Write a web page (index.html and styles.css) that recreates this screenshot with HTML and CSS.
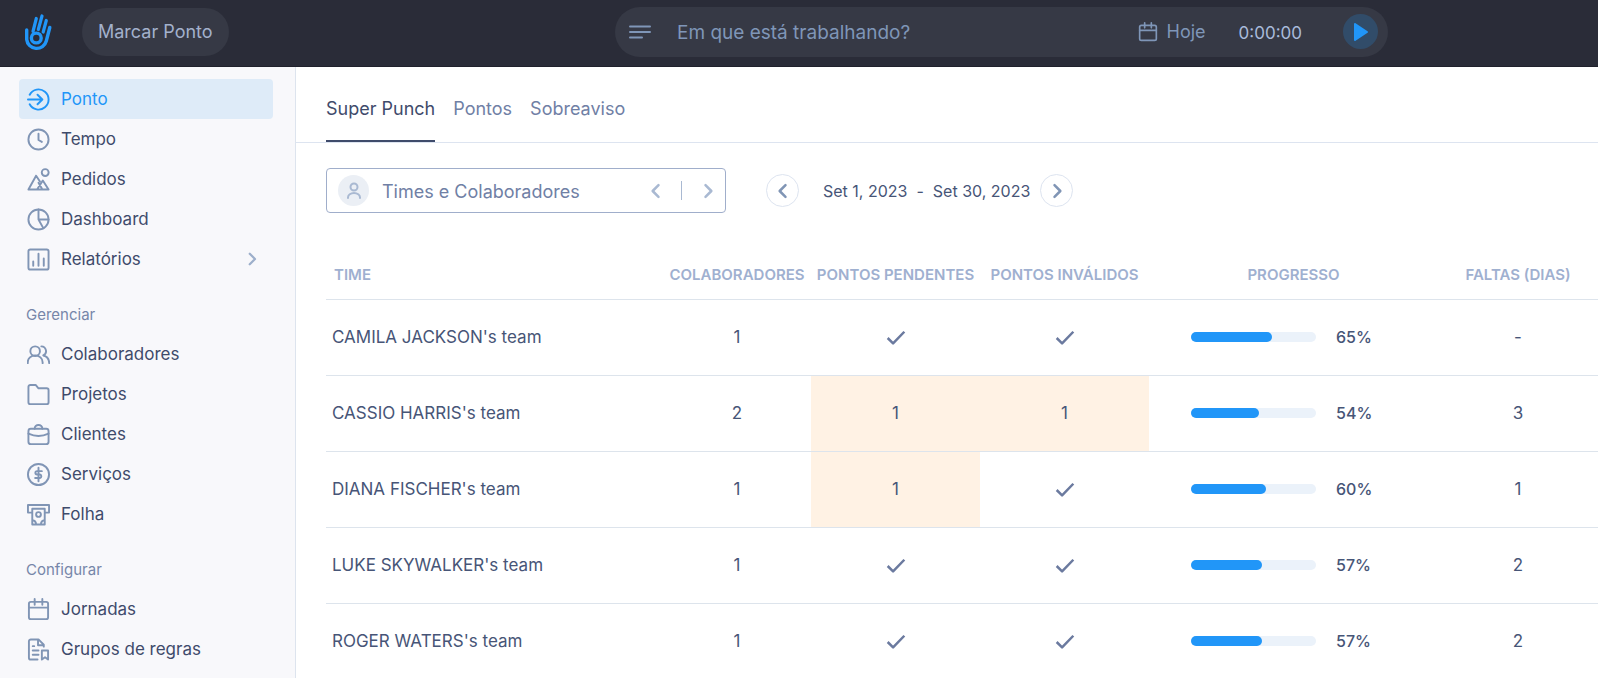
FILE: index.html
```html
<!DOCTYPE html>
<html lang="pt-BR">
<head>
    <meta charset="UTF-8">
    <meta name="viewport" content="width=device-width, initial-scale=1.0">
    <title>Super Punch</title>
    <link rel="stylesheet" href="styles.css">
</head>
<body>
    <svg class="sprite" aria-hidden="true">
        <symbol id="left" viewBox="0 0 24 24"><path d="M15 5l-7 7 7 7"/></symbol>
        <symbol id="right" viewBox="0 0 24 24"><path d="M9 5l7 7-7 7"/></symbol>
        <symbol id="check" viewBox="0 0 24 24"><path d="M2 12l6.500 6.500L22 4.500"/></symbol>
        <symbol id="calendar" viewBox="0 0 24 24"><rect x="2" y="4" width="20" height="18" rx="2"/><path d="M2 10h20M8 1v6M16 1v6"/></symbol>
    </svg>

    <header class="topbar">
        <a class="logo" href="#home" aria-label="Início">
            <svg viewBox="0 0 28 38">
                <path d="M2.700 17v9.500a10 10 0 0 0 19.600 1.500L25.800 14.500" stroke-width="3.400"/>
                <path d="M9 18.500L12.300 5.500M14.300 16.500L18 3M19.200 19L22.300 7.500" stroke-width="3.200"/>
                <circle cx="12.300" cy="25" r="4.900" stroke-width="3.400"/>
            </svg>
        </a>
        <button class="punch-btn" type="button">Marcar Ponto</button>
        <form class="tracker">
            <svg class="lines" viewBox="0 0 22 14"><path d="M1 1.500h20M1 7h20M1 12.500h12"/></svg>
            <input class="tracker-input" type="text" aria-label="Tarefa" placeholder="Em que está trabalhando?">
            <button class="today" type="button"><svg class="icon-small"><use href="#calendar"/></svg>Hoje</button>
            <span class="timer">0:00:00</span>
            <button class="play" type="button" aria-label="Iniciar">
                <svg viewBox="0 0 14 18"><path d="M1 1v16l12-8z"/></svg>
            </button>
        </form>
    </header>

    <div class="layout">
        <nav class="sidebar">
            <a class="nav-item active" href="#ponto">
                <svg class="icon" viewBox="0 0 24 24"><path d="M2.800 7a10.500 10.500 0 1 1 0 10M1 12h14.500M11 7l5 5-5 5"/></svg>Ponto
            </a>
            <a class="nav-item" href="#tempo">
                <svg class="icon" viewBox="0 0 24 24"><circle cx="12" cy="12" r="10.500"/><path d="M12 6v6.500l3.500 2"/></svg>Tempo
            </a>
            <a class="nav-item" href="#pedidos">
                <svg class="icon" viewBox="0 0 24 24"><circle cx="19" cy="4.800" r="3.600"/><path d="M13.500 14L9.500 8 1.500 22.500h21L16.500 13l-6 9.500M12 15.500l3.500 6"/></svg>Pedidos
            </a>
            <a class="nav-item" href="#dashboard">
                <svg class="icon" viewBox="0 0 24 24"><circle cx="12" cy="12" r="10.500"/><path d="M12 1.500V12h10.500M12 12l5 9"/></svg>Dashboard
            </a>
            <a class="nav-item" href="#relatorios">
                <svg class="icon" viewBox="0 0 24 24"><rect x="1.500" y="1.500" width="21" height="21" rx="2"/><path d="M6.500 14v4.500M12 6v12.500M17.500 11v7.500"/></svg>Relatórios
                <svg class="expand"><use href="#right"/></svg>
            </a>

            <h2 class="nav-title">Gerenciar</h2>
            <a class="nav-item" href="#colaboradores">
                <svg class="icon" viewBox="0 0 24 24"><circle cx="8.500" cy="8.500" r="5"/><path d="M.800 21v-1a7.700 7 0 0 1 15.500 0v1M15 3.500a5 5 0 0 1 2 9.500c3.500.800 6 3.500 6.200 8"/></svg>Colaboradores
            </a>
            <a class="nav-item" href="#projetos">
                <svg class="icon" viewBox="0 0 24 24"><path d="M3.500 2h5.500l3 3.500h8.500a2 2 0 0 1 2 2v12.500a2 2 0 0 1-2 2h-17a2 2 0 0 1-2-2V4a2 2 0 0 1 2-2z"/></svg>Projetos
            </a>
            <a class="nav-item" href="#clientes">
                <svg class="icon" viewBox="0 0 24 24"><rect x="1.500" y="6" width="21" height="16" rx="2.500"/><path d="M8 6a3.500 3.500 0 0 1 8 0M1.500 11q10.500 5 21 0"/></svg>Clientes
            </a>
            <a class="nav-item" href="#servicos">
                <svg class="icon" viewBox="0 0 24 24"><circle cx="12" cy="12" r="11"/><path d="M12 5v14M15.500 8.500h-5a1.700 1.700 0 0 0 0 3.500h3a1.900 1.900 0 0 1 0 3.700H8.500"/></svg>Serviços
            </a>
            <a class="nav-item" href="#folha">
                <svg class="icon" viewBox="0 0 24 24"><path d="M5 10H1V2h22v8h-4M5.500 6h13v16.500h-13zM5.500 18a4.500 4.500 0 0 1 4 4.500M18.500 18a4.500 4.500 0 0 0-4 4.500"/><circle cx="12" cy="12" r="2.500"/></svg>Folha
            </a>

            <h2 class="nav-title">Configurar</h2>
            <a class="nav-item" href="#jornadas">
                <svg class="icon"><use href="#calendar"/></svg>Jornadas
            </a>
            <a class="nav-item" href="#regras">
                <svg class="icon" viewBox="0 0 24 24"><path d="M11 22.500H4a2 2 0 0 1-2-2v-17a2 2 0 0 1 2-2h8l5.500 5.500v2M11.500 1.500V7.500h6M6 8.500h1.500M6 13h6M6 17.500h6M15.500 22.500V13h6.500v9.500l-3.200-2.500z"/></svg>Grupos de regras
            </a>
        </nav>

        <main class="main">
            <nav class="tabs">
                <a class="tab selected" href="#super-punch">Super Punch</a>
                <a class="tab" href="#pontos">Pontos</a>
                <a class="tab" href="#sobreaviso">Sobreaviso</a>
            </nav>

            <div class="filters">
                <div class="team-picker">
                    <span class="avatar"><svg viewBox="0 0 16 18"><circle cx="8" cy="5" r="3.500"/><path d="M2 16v-.500a6 4.500 0 0 1 12 0v.500"/></svg></span>
                    <button class="team-name" type="button">Times e Colaboradores</button>
                    <button class="step" type="button" aria-label="Time anterior"><svg><use href="#left"/></svg></button>
                    <span class="divider"></span>
                    <button class="step" type="button" aria-label="Próximo time"><svg><use href="#right"/></svg></button>
                </div>
                <div class="period">
                    <button class="round" type="button" aria-label="Período anterior"><svg><use href="#left"/></svg></button>
                    <span class="dates"><span>Set 1, 2023</span><span>-</span><span>Set 30, 2023</span></span>
                    <button class="round" type="button" aria-label="Próximo período"><svg><use href="#right"/></svg></button>
                </div>
            </div>

            <table class="teams">
                <thead>
                    <tr>
                        <th class="col-team">Time</th>
                        <th class="col-members">Colaboradores</th>
                        <th class="col-punch">Pontos pendentes</th>
                        <th class="col-punch">Pontos inválidos</th>
                        <th class="col-progress">Progresso</th>
                        <th class="col-absence">Faltas (dias)</th>
                    </tr>
                </thead>
                <tbody>
                    <tr>
                        <td>CAMILA JACKSON's team</td>
                        <td>1</td>
                        <td><svg class="check"><use href="#check"/></svg></td>
                        <td><svg class="check"><use href="#check"/></svg></td>
                        <td><div class="progress"><div class="bar"><div class="fill" style="width: 65%"></div></div>65%</div></td>
                        <td>-</td>
                    </tr>
                    <tr>
                        <td>CASSIO HARRIS's team</td>
                        <td>2</td>
                        <td class="warn">1</td>
                        <td class="warn">1</td>
                        <td><div class="progress"><div class="bar"><div class="fill" style="width: 54%"></div></div>54%</div></td>
                        <td>3</td>
                    </tr>
                    <tr>
                        <td>DIANA FISCHER's team</td>
                        <td>1</td>
                        <td class="warn">1</td>
                        <td><svg class="check"><use href="#check"/></svg></td>
                        <td><div class="progress"><div class="bar"><div class="fill" style="width: 60%"></div></div>60%</div></td>
                        <td>1</td>
                    </tr>
                    <tr>
                        <td>LUKE SKYWALKER's team</td>
                        <td>1</td>
                        <td><svg class="check"><use href="#check"/></svg></td>
                        <td><svg class="check"><use href="#check"/></svg></td>
                        <td><div class="progress"><div class="bar"><div class="fill" style="width: 57%"></div></div>57%</div></td>
                        <td>2</td>
                    </tr>
                    <tr>
                        <td>ROGER WATERS's team</td>
                        <td>1</td>
                        <td><svg class="check"><use href="#check"/></svg></td>
                        <td><svg class="check"><use href="#check"/></svg></td>
                        <td><div class="progress"><div class="bar"><div class="fill" style="width: 57%"></div></div>57%</div></td>
                        <td>2</td>
                    </tr>
                </tbody>
            </table>
        </main>
    </div>
</body>
</html>
```
FILE: styles.css
```css
* {
    margin: 0;
    padding: 0;
    box-sizing: border-box;
}

body {
    display: flex;
    flex-direction: column;
    height: 100vh;
    overflow: hidden;
    font-family: Inter, "Liberation Sans", sans-serif;
    font-size: 17px;
    color: #475577;
    background-color: #fff;
}

a {
    color: inherit;
    text-decoration: none;
}

button,
input {
    font: inherit;
    color: inherit;
    background: none;
    border: none;
}

svg {
    fill: none;
    stroke: currentColor;
    stroke-width: 2;
    stroke-linecap: round;
    stroke-linejoin: round;
    flex-shrink: 0;
}

.sprite {
    display: none;
}

/* Top bar */
.topbar {
    display: flex;
    align-items: center;
    flex-shrink: 0;
    height: 67px;
    padding: 0 210px 3px 24px;
    background-color: #2a2c38;
    border-bottom: 1px solid #20212c;
}

.logo {
    display: flex;
    margin-right: 30px;
    color: #2196f8;
}

.logo svg {
    width: 28px;
    height: 38px;
}

.punch-btn {
    height: 48px;
    padding: 0 16px;
    border-radius: 24px;
    font-size: 18px;
    white-space: nowrap;
    color: #a3b1cc;
    background-color: #363945;
}

.tracker {
    display: flex;
    align-items: center;
    flex: 0 1 773px;
    height: 50px;
    margin-left: auto;
    padding: 0 10px 0 14px;
    border-radius: 25px;
    font-size: 18px;
    color: #7f96b8;
    background-color: #363945;
}

.lines {
    width: 22px;
    height: 14px;
}

.tracker-input {
    flex: 1;
    min-width: 0;
    margin-left: 26px;
    padding-top: 2px;
    font-size: 19px;
    outline: none;
}

.tracker-input::placeholder {
    color: #7f96b8;
}

.today {
    display: flex;
    align-items: center;
    gap: 9px;
}

.icon-small {
    width: 20px;
    height: 20px;
}

.timer {
    margin: 0 41px 0 33px;
    padding-top: 2px;
    font-size: 17px;
    color: #a9bbdb;
}

.play {
    display: flex;
    align-items: center;
    justify-content: center;
    width: 35px;
    height: 35px;
    border-radius: 50%;
    color: #2196f8;
    background-color: #314c69;
}

.play svg {
    width: 14px;
    height: 18px;
    fill: currentColor;
}

/* Sidebar */
.layout {
    display: flex;
    flex: 1;
    min-height: 0;
}

.sidebar {
    flex: 0 0 296px;
    padding: 12px 22px 0 19px;
    overflow: hidden;
    background-color: #f8f8fb;
    border-right: 1px solid #dde4ee;
}

.nav-item {
    display: flex;
    align-items: center;
    gap: 11px;
    height: 40px;
    padding: 0 12px 0 8px;
    border-radius: 4px;
    color: #3f4b6b;
}

.nav-item.active {
    color: #2196f8;
    background-color: #deebf8;
}

.icon {
    width: 23px;
    height: 23px;
    color: #8095b5;
}

.active .icon {
    color: inherit;
}

.expand {
    width: 18px;
    height: 18px;
    margin-left: auto;
    stroke-width: 3;
    color: #9dafcb;
}

.nav-title {
    height: 55px;
    padding: 21px 0 0 7px;
    font-size: 15px;
    font-weight: 400;
    line-height: 30px;
    color: #7686a9;
}

/* Main area */
.main {
    flex: 1;
    min-width: 0;
}

.tabs {
    display: flex;
    gap: 18px;
    height: 76px;
    padding-left: 30px;
    border-bottom: 1px solid #dde4f0;
}

.tab {
    padding-top: 8px;
    font-size: 18px;
    line-height: 67px;
    color: #7080a5;
}

.tab.selected {
    color: #3f4b6b;
    border-bottom: 2px solid #3f4b6b;
}

.filters {
    display: flex;
    align-items: center;
    gap: 40px;
    padding: 25px 30px 0;
}

.team-picker {
    display: flex;
    align-items: center;
    width: 400px;
    height: 45px;
    padding: 0 7px 0 11px;
    border: 1px solid #a0aecb;
    border-radius: 4px;
    color: #a9b9d2;
}

.avatar {
    display: flex;
    align-items: center;
    justify-content: center;
    width: 31px;
    height: 31px;
    border-radius: 50%;
    background-color: #ebeff5;
}

.avatar svg {
    width: 16px;
    height: 18px;
}

.team-name {
    flex: 1;
    padding: 2px 0 0 13px;
    font-size: 18px;
    text-align: left;
    color: #7080a5;
}

.step {
    display: flex;
}

.step svg,
.round svg {
    width: 20px;
    height: 20px;
    stroke-width: 3;
}

.divider {
    width: 1px;
    height: 19px;
    margin: 0 16px 0 15px;
    background-color: #a9b9d2;
}

.period {
    display: flex;
    align-items: center;
}

.round {
    display: flex;
    align-items: center;
    justify-content: center;
    width: 33px;
    height: 33px;
    border: 1px solid #dde4f0;
    border-radius: 50%;
    color: #8095b5;
}

.dates {
    display: flex;
    gap: 9px;
    margin: 0 10px 0 24px;
    font-size: 16px;
}

/* Teams table */
.teams {
    width: calc(100% - 30px);
    margin: 35px 0 0 30px;
    table-layout: fixed;
    border-collapse: collapse;
    text-align: center;
}

.teams th {
    height: 51px;
    padding-top: 2px;
    font-size: 15px;
    font-weight: 600;
    text-transform: uppercase;
    white-space: nowrap;
    color: #9fb0d0;
    border-bottom: 1px solid #dde4ec;
}

.teams td {
    height: 76px;
    border-bottom: 1px solid #dde4ec;
}

.teams .col-team {
    padding-left: 8px;
    text-align: left;
}

.teams td:first-child {
    padding-left: 6px;
    text-align: left;
}

.col-members {
    width: 148px;
}

.col-punch {
    width: 169px;
}

.col-progress {
    width: 289px;
}

.col-absence {
    width: 160px;
}

.warn {
    background-color: #fff2e4;
}

.check {
    width: 20px;
    height: 20px;
    vertical-align: middle;
    stroke-width: 3;
    stroke-linecap: butt;
    color: #6b7a9f;
}

.progress {
    display: flex;
    align-items: center;
    gap: 20px;
    padding-left: 42px;
    font-size: 16px;
    font-weight: 500;
}

.bar {
    width: 125px;
    height: 10px;
    border-radius: 5px;
    background-color: #ebf2fa;
}

.fill {
    height: 100%;
    border-radius: 5px;
    background-color: #2196f8;
}
```
